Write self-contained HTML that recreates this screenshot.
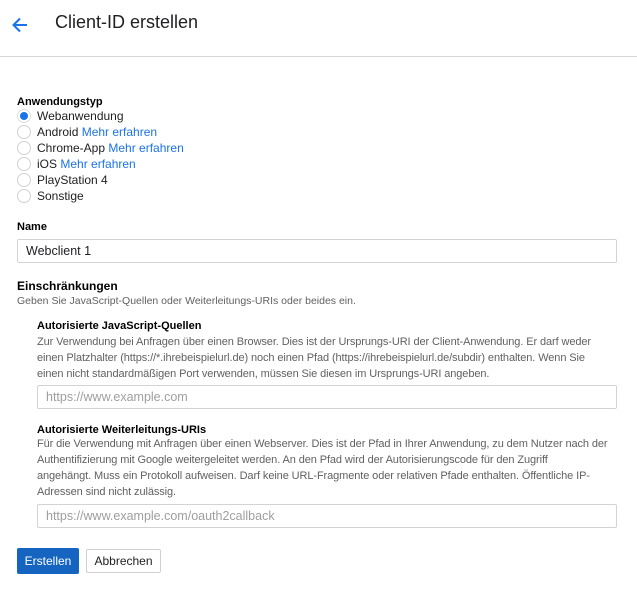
<!DOCTYPE html>
<html><head><meta charset="utf-8"><style>
body{margin:0;width:637px;height:604px;background:#fff;font-family:"Liberation Sans",Arial,sans-serif;color:#212121;position:relative;overflow:hidden}
.a{position:absolute;white-space:nowrap}
.b{font-weight:bold;font-size:11px;color:#000}
.r{position:absolute;left:17px;border:1px solid #d0d0d0;border-radius:50%;box-sizing:border-box;width:14px;height:14px}
.l{position:absolute;left:37px;font-size:12px;color:#202124}
.l span{color:#1a73e8}
.in{position:absolute;border:1px solid #d3d3d3;border-radius:2px;box-sizing:border-box;font-size:12.5px;color:#9e9e9e;padding-left:8px;line-height:22px}
.p{position:absolute;left:37px;font-size:11px;color:#616161;line-height:16px;width:590px;letter-spacing:-0.1px}
</style></head><body>
<svg class="a" style="left:11px;top:16px" width="18" height="18" viewBox="0 0 18 18"><path d="M16 9H3M9 2.5L2.5 9 9 15.5" stroke="#1a73e8" stroke-width="2" fill="none"/></svg>
<div class="a" style="left:55px;top:12px;font-size:18px;color:#202124">Client-ID erstellen</div>
<div class="a" style="left:0;top:56px;width:637px;height:1px;background:#d6d6d6"></div>
<div class="a b" style="left:17px;top:96px">Anwendungstyp</div>
<div class="r" style="top:109px;border-color:#ddd"><div style="position:absolute;left:2px;top:2px;width:8px;height:8px;border-radius:50%;background:#1a73e8"></div></div>
<div class="l" style="top:109px">Webanwendung</div>
<div class="r" style="top:125px"></div><div class="l" style="top:125px">Android <span>Mehr erfahren</span></div>
<div class="r" style="top:141px"></div><div class="l" style="top:141px">Chrome-App <span>Mehr erfahren</span></div>
<div class="r" style="top:157px"></div><div class="l" style="top:157px">iOS <span>Mehr erfahren</span></div>
<div class="r" style="top:173px"></div><div class="l" style="top:173px">PlayStation 4</div>
<div class="r" style="top:189px"></div><div class="l" style="top:189px">Sonstige</div>
<div class="a b" style="left:17px;top:221px">Name</div>
<div class="in" style="left:17px;top:239px;width:600px;height:24px;color:#202124">Webclient 1</div>
<div class="a" style="left:17px;top:279px;font-size:12px;font-weight:bold;color:#000">Einschränkungen</div>
<div class="a" style="left:17px;top:295px;font-size:10.5px;color:#616161">Geben Sie JavaScript-Quellen oder Weiterleitungs-URIs oder beides ein.</div>
<div class="a b" style="left:37px;top:320px">Autorisierte JavaScript-Quellen</div>
<div class="p" style="top:334px">Zur Verwendung bei Anfragen über einen Browser. Dies ist der Ursprungs-URI der Client-Anwendung. Er darf weder<br>einen Platzhalter (https://*.ihrebeispielurl.de) noch einen Pfad (https://ihrebeispielurl.de/subdir) enthalten. Wenn Sie<br>einen nicht standardmäßigen Port verwenden, müssen Sie diesen im Ursprungs-URI angeben.</div>
<div class="in" style="left:37px;top:385px;width:580px;height:24px">https://www.example.com</div>
<div class="a b" style="left:37px;top:424px">Autorisierte Weiterleitungs-URIs</div>
<div class="p" style="top:436px">Für die Verwendung mit Anfragen über einen Webserver. Dies ist der Pfad in Ihrer Anwendung, zu dem Nutzer nach der<br>Authentifizierung mit Google weitergeleitet werden. An den Pfad wird der Autorisierungscode für den Zugriff<br>angehängt. Muss ein Protokoll aufweisen. Darf keine URL-Fragmente oder relativen Pfade enthalten. Öffentliche IP-<br>Adressen sind nicht zulässig.</div>
<div class="in" style="left:37px;top:504px;width:580px;height:24px">https://www.example.com/oauth2callback</div>
<div class="a" style="left:17px;top:548px;width:62px;height:26px;background:#1565c0;border-radius:2px;color:#fff;font-size:12px;text-align:center;line-height:26px">Erstellen</div>
<div class="a" style="left:86px;top:549px;width:75px;height:24px;border:1px solid #d0d0d0;border-radius:2px;box-sizing:border-box;color:#202124;font-size:12px;text-align:center;line-height:22px">Abbrechen</div>
</body></html>
